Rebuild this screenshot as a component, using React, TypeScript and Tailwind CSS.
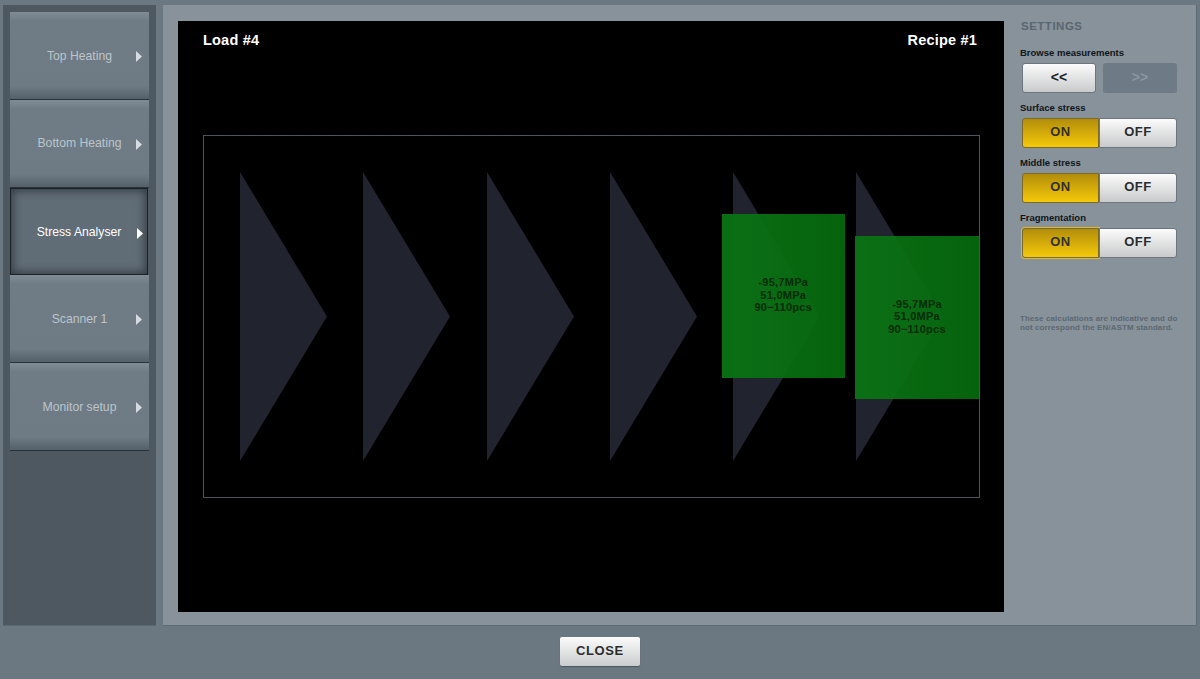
const font = "font-['Liberation_Sans',Arial,sans-serif]";

const menuItems = [
  { label: 'Top Heating', active: false },
  { label: 'Bottom Heating', active: false },
  { label: 'Stress Analyser', active: true },
  { label: 'Scanner 1', active: false },
  { label: 'Monitor setup', active: false },
];

const triangles = [239.5, 362.5, 486.5, 609.5, 732.5, 855.5];

function MenuButton({ label, active }: { label: string; active: boolean }) {
  if (active) {
    return (
      <div className="relative flex h-[87.75px] w-[138px] shrink-0 items-center justify-center border border-[#1a2127] bg-[#606c76] pt-[1px] shadow-[inset_0_0_8px_2px_#333d45]">
        <span className="text-[12.2px] text-white">{label}</span>
        <Arrow color="text-white" />
      </div>
    );
  }
  return (
    <div className="relative flex h-[87.75px] w-[139px] shrink-0 items-center justify-center border-b border-[#27323a] bg-[linear-gradient(to_bottom,#808c95_0px,#6f7c86_9px,#6e7b85_74px,#56626b_86px)] pt-[1px]">
      <span className="text-[12.2px] text-[#bcc4ca]">{label}</span>
      <Arrow color="text-[#d5dbe0]" />
    </div>
  );
}

function Arrow({ color }: { color: string }) {
  return (
    <svg viewBox="0 0 6 11" className={`absolute left-[126px] top-[39px] h-[11px] w-[6px] ${color}`}>
      <path d="M0 0 L6 5.5 L0 11 Z" fill="currentColor" />
    </svg>
  );
}

function Reading({ className }: { className: string }) {
  return (
    <div className={`absolute flex flex-col items-center justify-center bg-[linear-gradient(to_right,#0a7514ee,#066a0eee)] pb-[2px] text-[11px] font-bold leading-[12.5px] tracking-[0.25px] text-[#032b07] ${className}`}>
      <span>-95,7MPa</span>
      <span>51,0MPa</span>
      <span>90−110pcs</span>
    </div>
  );
}

function Toggle({ label, focused }: { label: string; focused?: boolean }) {
  return (
    <div className="flex flex-col">
      <span className="mb-[5px] text-[9.5px] font-bold leading-[11px] text-[#0f151a]">{label}</span>
      <div className="ml-[2px] flex h-[30px] w-[155px]">
        <div
          className={`flex w-[77px] items-center justify-center rounded-l-[3px] border border-[#7b6a2a] bg-[linear-gradient(to_bottom,#b28d0a,#f5c90a)] pb-[2px] text-[13px] font-bold tracking-[0.5px] text-[#33302a] ${focused ? 'shadow-[0_0_0_1px_#d9b93a]' : ''}`}
        >
          ON
        </div>
        <div className="flex flex-1 items-center justify-center rounded-r-[3px] border border-[#6d767d] bg-[linear-gradient(to_bottom,#fbfbfb,#c9cacb)] pb-[2px] text-[13px] font-bold tracking-[0.5px] text-[#2a2c2e]">
          OFF
        </div>
      </div>
    </div>
  );
}

export default function App() {
  return (
    <div className={`flex h-[679px] w-[1200px] flex-col overflow-hidden bg-[#6b7882] ${font}`}>
      <div className="flex h-[626px] shrink-0 gap-[7px] pl-[3px] pr-[5px] pt-[5px]">
        {/* left menu */}
        <aside className="flex w-[153px] shrink-0 flex-col border-b border-[#5c6871] bg-[#4d5860] pl-[7px] pt-[7px]">
          {menuItems.map((item) => (
            <MenuButton key={item.label} label={item.label} active={item.active} />
          ))}
        </aside>

        {/* main panel */}
        <main className="flex flex-1 border-b border-r border-[#5f6b74] bg-[#87929b] pb-[13px] pl-[15px] pt-[16px]">
          <div className="relative w-[826px] shrink-0 bg-black text-white">
            <div className="flex items-center justify-between pl-[25px] pr-[27px] pt-[9.5px] text-[14.5px] font-bold leading-[18px] tracking-[0.2px]">
              <span>Load #4</span>
              <span>Recipe #1</span>
            </div>
            <div className="absolute left-[25px] top-[114px] h-[363px] w-[777px] border border-[#50535f]" />
            {triangles.map((x) => (
              <svg key={x} viewBox="0 0 87 289" className="absolute top-[151px] h-[289px] w-[87px]" style={{ left: x - 178 }}>
                <path d="M0 0 L87 144.5 L0 289 Z" fill="#21242f" />
              </svg>
            ))}
            <Reading className="left-[543.5px] top-[192.5px] h-[164.5px] w-[123.5px]" />
            <Reading className="left-[677px] top-[215px] h-[163px] w-[124px]" />
          </div>

          {/* settings */}
          <section className="flex flex-1 flex-col pl-[16px] pr-[18px]">
            <h2 className="ml-[1px] mt-[-2px] text-[11.5px] font-bold leading-[14px] tracking-[0.5px] text-[#5a6670]">SETTINGS</h2>
            <span className="mb-[5px] mt-[14px] text-[9.5px] font-bold leading-[11px] text-[#0f151a]">Browse measurements</span>
            <div className="ml-[2px] flex h-[30px] w-[155px] justify-between">
              <div className="flex w-[74px] items-center justify-center rounded-[3px] border border-[#6d767d] bg-[linear-gradient(to_bottom,#fbfbfb,#c9cacb)] pb-[2px] text-[14px] font-bold text-[#1e2022]">
                &lt;&lt;
              </div>
              <div className="flex w-[74px] items-center justify-center rounded-[3px] bg-[#6e7b86] pb-[2px] text-[14px] font-bold text-[#8b96a0]">
                &gt;&gt;
              </div>
            </div>
            <div className="mt-[9px] flex flex-col gap-[9px]">
              <Toggle label="Surface stress" />
              <Toggle label="Middle stress" />
              <Toggle label="Fragmentation" focused />
            </div>
            <p className="mt-[55.5px] w-[158px] text-[8px] font-bold leading-[9.5px] tracking-[0.1px] text-[#5c6872]">
              These calculations are indicative and do not correspond the EN/ASTM standard.
            </p>
          </section>
        </main>
      </div>

      {/* footer */}
      <footer className="flex flex-1 items-start justify-center pt-[11px]">
        <div className="flex h-[29px] w-[80px] items-center justify-center rounded-[2px] bg-[linear-gradient(to_bottom,#fbfbfb,#cbcccd)] pb-[2px] text-[13px] font-bold tracking-[0.6px] text-[#2a2c2e] shadow-[0_1px_1px_#4a545c]">
          CLOSE
        </div>
      </footer>
    </div>
  );
}
